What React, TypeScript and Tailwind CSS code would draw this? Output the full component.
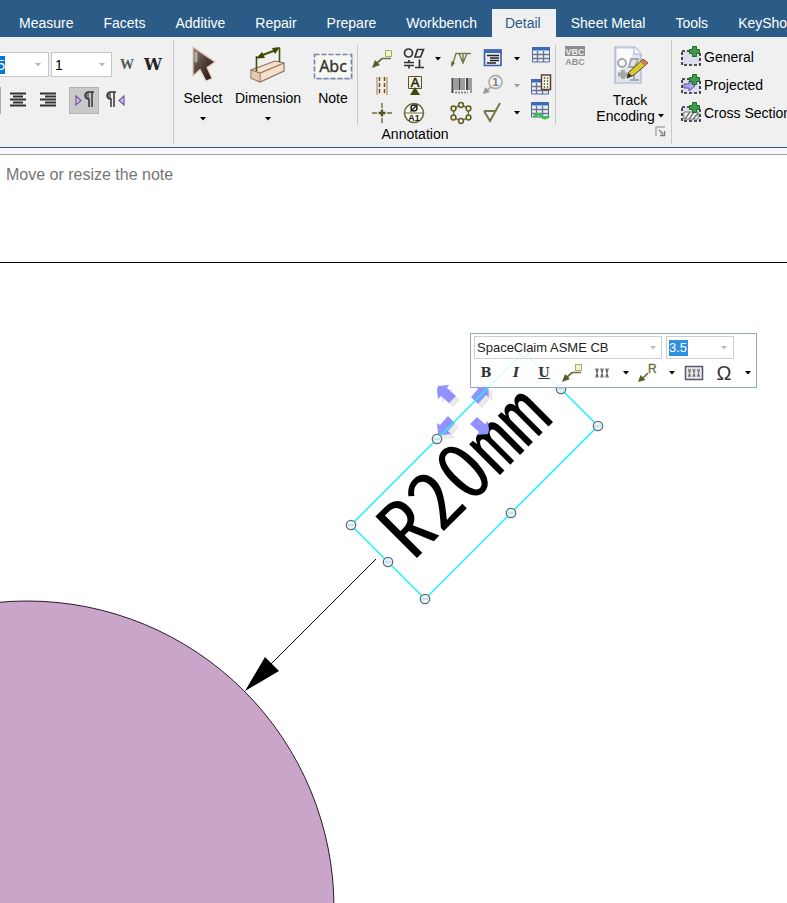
import type { ReactNode } from "react";
import { useState } from "react";

const tabs = [
  "Measure",
  "Facets",
  "Additive",
  "Repair",
  "Prepare",
  "Workbench",
  "Detail",
  "Sheet Metal",
  "Tools",
  "KeyShot",
];

type IconProps = { children: ReactNode; w?: number; h?: number };

const Icon = ({ children, w = 24, h = 24 }: IconProps) => (
  <svg width={w} height={h} viewBox={`0 0 ${w} ${h}`} className="block shrink-0" aria-hidden="true">
    {children}
  </svg>
);

const Caret = ({ color = "#000" }: { color?: string }) => (
  <Icon w={6} h={4}>
    <path d="M0 0H6L3 3.5Z" fill={color} />
  </Icon>
);

type ToolProps = { label: string; children: ReactNode; className?: string };

const Tool = ({ label, children, className = "size-6" }: ToolProps) => (
  <button type="button" aria-label={label} className={`flex shrink-0 items-center justify-center ${className}`}>
    {children}
  </button>
);

const Separator = () => <div className="w-px shrink-0 self-stretch bg-[#c8c8c8]" />;

/* ---------- icons ---------- */

const AlignCenterIcon = () => (
  <Icon w={18} h={16}>
    <path d="M1 1.500H17M4 4.500H14M1 7.500H17M4 10.500H14M1 13.500H17" stroke="#333" strokeWidth="1.8" />
  </Icon>
);

const AlignRightIcon = () => (
  <Icon w={18} h={16}>
    <path d="M1 1.500H17M6 4.500H17M1 7.500H17M6 10.500H17M1 13.500H17" stroke="#333" strokeWidth="1.8" />
  </Icon>
);

const pilcrow = "M7 1H3.5a3.2 3.2 0 0 0 0 7H4V16M7 1V16M4 1H9";

const LtrIcon = () => (
  <Icon w={22} h={18}>
    <path d="M3 5L8 9.5L3 14Z" fill="#c9bfe6" stroke="#7358a8" strokeWidth="1.2" />
    <g transform="translate(12 0)">
      <path d="M4 1H3.5a3.2 3.2 0 0 0 0 7H4Z" fill="#777" />
      <path d={pilcrow} fill="none" stroke="#333" strokeWidth="1.5" />
    </g>
  </Icon>
);

const RtlIcon = () => (
  <Icon w={22} h={18}>
    <path d="M19 5L14 9.5L19 14Z" fill="#c9bfe6" stroke="#7358a8" strokeWidth="1.2" />
    <g transform="translate(2 0)">
      <path d="M4 1H3.5a3.2 3.2 0 0 0 0 7H4Z" fill="#777" />
      <path d={pilcrow} fill="none" stroke="#333" strokeWidth="1.5" />
    </g>
  </Icon>
);

const SelectIcon = () => (
  <Icon w={40} h={40}>
    <defs>
      <linearGradient id="cursor" x1="0" y1="0" x2="1" y2="1">
        <stop offset="0" stopColor="#8a8280" />
        <stop offset="0.4" stopColor="#5a4a45" />
        <stop offset="1" stopColor="#1c0c06" />
      </linearGradient>
    </defs>
    <path
      d="M10 2V31L17 24.500L23 36L29 33.500L24 22.500L32 17Z"
      fill="url(#cursor)"
      stroke="#e8c8b4"
      strokeWidth="1.2"
    />
    <path d="M13 8V16" stroke="#d0cac8" strokeWidth="3" strokeLinecap="round" opacity="0.7" />
  </Icon>
);

const DimensionIcon = () => (
  <Icon w={40} h={40}>
    <path d="M3 25L27 16L36 18V26L12 37L3 33Z" fill="#f7dfcb" stroke="#8d7465" strokeWidth="1.2" />
    <path d="M3 25L12 28L36 18M12 28V37" fill="none" stroke="#8d7465" strokeWidth="1.2" />
    <path d="M3.500 26L11.500 28.500V36L3.500 33Z" fill="#e8c8b0" />
    <path d="M8.500 11V26M31.500 3V17" stroke="#4a5208" strokeWidth="1.6" />
    <path d="M12 11L28 5" stroke="#4a5208" strokeWidth="2.2" />
    <path d="M8 13.500L14 7L17 13ZM32 2L24 3L27 9Z" fill="#3d4500" />
  </Icon>
);

const NoteIcon = () => (
  <svg width="40" height="40" viewBox="0 0 40 40" className="block shrink-0" aria-hidden="true">
    <path d="M3 10H40V35H3Z" fill="#d8d8d8" />
    <path d="M1.500 9.500H38.500V33.500H1.500Z" fill="#f7f8f1" stroke="#7382b4" strokeWidth="1.6" strokeDasharray="5 2" />
    <text x="20" y="27" textAnchor="middle" fontSize="16" fill="#333" stroke="#333" strokeWidth="0.3" className="font-['Noto_Sans','Open_Sans',sans-serif]">
      Abc
    </text>
  </svg>
);

const LeaderNoteIcon = () => (
  <Icon>
    <path d="M15.500 3.500H21.500V9.500H15.500Z" fill="#f2f2c4" stroke="#a9a96a" />
    <path d="M21 11.500H12L6 17" fill="none" stroke="#6b6b38" strokeWidth="1.700" />
    <path d="M2 21L5 13L10 18Z" fill="#5c5c28" />
  </Icon>
);

const ToleranceIcon = () => (
  <Icon>
    <g fill="none" stroke="#333" strokeWidth="1.700">
      <circle cx="6.500" cy="6" r="4" />
      <path d="M15.500 2.500H21.500L18.500 10H13ZM2 15.500H12M2 18.500H12M7 13V15M7 19V21.500M17.500 12.500V20.500M13 20.500H22" />
    </g>
  </Icon>
);

const SurfaceIcon = () => (
  <Icon>
    <path d="M3 19L7 6.500H22M10 6.500L14 16L18 6.500M14 6.500V16" fill="none" stroke="#77774c" strokeWidth="1.400" />
    <path d="M2 20L2.500 14L6 16Z" fill="#66663a" />
  </Icon>
);

const CenterlineIcon = () => (
  <Icon>
    <path d="M6 3H11V21H6ZM13 3H18V21H13Z" fill="#fbe4d8" />
    <path d="M7 3V21M17 3V21" stroke="#b09080" strokeWidth="1.200" />
    <path d="M9.500 3V21M14.500 3V21" stroke="#4f5b2a" strokeWidth="1.400" strokeDasharray="4 2" />
  </Icon>
);

const DatumIcon = () => (
  <svg width="24" height="24" viewBox="0 0 24 24" className="block" aria-hidden="true">
    <path d="M6.500 2.500H19.500V14.500H6.500Z" fill="#f4f4dc" stroke="#55552a" />
    <text x="13" y="13" textAnchor="middle" fontSize="13" fill="#222" stroke="#222" strokeWidth="0.500" className="font-['Liberation_Sans']">
      A
    </text>
    <path d="M13 13L18 21H8Z" fill="#44440f" />
  </svg>
);

const BarcodeIcon = () => (
  <Icon>
    <path d="M3.500 4V19M10.500 4V16M18 4V16" stroke="#444" strokeWidth="2" />
    <path d="M6 4V16M8 4V16M13 4V16M15 4V16M20 4V16M22 4V19" stroke="#666" strokeWidth="1.200" />
    <path d="M6 18.500H19" stroke="#888" strokeWidth="2" strokeDasharray="2 1" />
  </Icon>
);

const CenterMarkIcon = () => (
  <Icon>
    <path d="M12 2V7M12 17V22M2 12H7M17 12H22" stroke="#8a8a5c" strokeWidth="1.800" />
    <path d="M8.500 12H15.500M12 8.500V15.500" stroke="#55552a" strokeWidth="2.400" />
  </Icon>
);

const DatumTargetIcon = () => (
  <svg width="24" height="24" viewBox="0 0 24 24" className="block" aria-hidden="true">
    <circle cx="12" cy="12" r="9.500" fill="#fafaf0" stroke="#6b6b38" strokeWidth="1.600" />
    <path d="M2 12H22" stroke="#6b6b38" />
    <g fill="none" stroke="#222" strokeWidth="1.500">
      <circle cx="12" cy="7" r="3" />
      <path d="M8.500 10.500L15.500 3.500" />
    </g>
    <text x="12" y="20" textAnchor="middle" fontSize="9" fontWeight="700" fill="#222" className="font-['Liberation_Sans']">
      A1
    </text>
  </svg>
);

const BoltCircleIcon = () => (
  <Icon>
    <circle cx="12" cy="12" r="7.500" fill="none" stroke="#6b6b38" strokeWidth="1.300" />
    {[
      [12, 4],
      [19.5, 7.5],
      [19.5, 16.5],
      [12, 20],
      [4.5, 16.5],
      [4.5, 7.5],
    ].map(([x, y]) => (
      <circle key={`${x}-${y}`} cx={x} cy={y} r="2.400" fill="#f4f4dc" stroke="#5c5c28" strokeWidth="1.500" />
    ))}
  </Icon>
);

const NotesListIcon = () => (
  <Icon>
    <path d="M3.500 3H20V18.500H3.500Z" fill="#e6ebf5" stroke="#3d5f9c" strokeWidth="1.600" />
    <path d="M3 2.500H21V6H3Z" fill="#3c6cb8" />
    <path d="M6 8.500H18M9 11H18M9 13.500H18M6 16H15" stroke="#222" strokeWidth="1.500" />
  </Icon>
);

const BalloonIcon = () => (
  <svg width="24" height="24" viewBox="0 0 24 24" className="block" aria-hidden="true">
    <circle cx="14.500" cy="8" r="6.500" fill="#f4f4f4" stroke="#b0b0b0" strokeWidth="1.800" />
    <text x="14.500" y="11.500" textAnchor="middle" fontSize="10" fontWeight="700" fill="#888" className="font-['DejaVu_Sans']">
      1
    </text>
    <path d="M10 13L5 17" stroke="#a8a8a8" strokeWidth="1.800" />
    <path d="M2 20L4 13L9 18Z" fill="#999" />
  </svg>
);

const FinishIcon = () => (
  <Icon>
    <path d="M3 10H14M3 10L9 20L19 2" fill="none" stroke="#77774c" strokeWidth="2" />
  </Icon>
);

const TableBase = () => (
  <>
    <path d="M3.500 2.500H20.500V17H3.500Z" fill="#eef2fa" stroke="#506a9c" />
    <path d="M3 9.500H20M3 13.500H20M8.500 6V17M14.500 6V17" stroke="#6c7490" strokeWidth="1.400" />
    <path d="M3 2H21V5.500H3Z" fill="#3c6cb8" />
  </>
);

const TableIcon = () => (
  <Icon>
    <g transform="translate(0 -2)">
      <TableBase />
    </g>
  </Icon>
);

const HoleTableIcon = () => (
  <Icon>
    <g transform="translate(-1 3)">
      <TableBase />
    </g>
    <path d="M12.500 1H21.500V15.500H12.500Z" fill="#fff6e8" stroke="#5a4030" strokeWidth="1.500" />
    <path d="M15.500 3V14M18.500 3V14" stroke="#5b7a58" strokeWidth="1.300" strokeDasharray="2 1" />
  </Icon>
);

const BendTableIcon = () => (
  <Icon>
    <g transform="translate(-1 -1)">
      <TableBase />
    </g>
    <path d="M5 16Q8 11 12 15T20 15" fill="none" stroke="#38c24c" strokeWidth="2.800" />
  </Icon>
);

const SpellIcon = () => (
  <svg width="24" height="24" viewBox="0 0 24 24" className="block" aria-hidden="true">
    <path d="M2 1H22V11H2Z" fill="#8c8c8c" />
    <text x="12" y="10" textAnchor="middle" fontSize="9" fontWeight="700" fill="#eee" className="font-['Liberation_Sans']">
      VBC
    </text>
    <text x="12" y="20" textAnchor="middle" fontSize="9" fontWeight="700" fill="#909090" className="font-['Liberation_Sans']">
      ABC
    </text>
  </svg>
);

const TrackIcon = () => (
  <Icon w={40} h={40}>
    <path d="M5 2H25L31 9V38H5Z" fill="#dfe4f1" stroke="#a8b0c8" strokeWidth="1.200" />
    <path d="M7 4H24L19 20L7 26Z" fill="#fafbff" />
    <path d="M24 2V9H31" fill="#fff" stroke="#a8b0c8" />
    <g fill="none" stroke="#a8a8a8" strokeWidth="2">
      <circle cx="12" cy="18" r="4" />
      <path d="M21 14H28L25 22H19ZM24 29V36M20 35H29" />
      <path d="M8 29.500H18M13 25V34" strokeWidth="4" />
    </g>
    <path d="M17 33L19 27L33 14L38 18L24 30Z" fill="#d9c830" stroke="#55480c" />
    <path d="M33 14L38 18L35 21L30.500 17Z" fill="#c47a5c" />
    <path d="M17 33L18.500 28L22 31Z" fill="#333" />
  </Icon>
);

const ViewIcon = ({ kind }: { kind: string }) => (
  <Icon w={22} h={22}>
    <path d="M2 5H20V19H2Z" fill="#dcdeee" />
    <path d="M2 5H20V19H2Z" fill="none" stroke="#222" strokeWidth="1.600" strokeDasharray="3 2" />
    {kind === "Projected" && (
      <path d="M4 10H9V7L15 12L9 17V14H4Z" fill="#a8a8f4" stroke="#55559c" />
    )}
    {kind === "Cross Section" && (
      <>
        <path d="M4 10H18V17H4Z" fill="#fff" stroke="#777" />
        <path d="M5 17L10 10M9 17L14 10M13 17L18 11" stroke="#777" strokeWidth="1.500" />
      </>
    )}
    <path d="M12.500 0.500H16.500V3.500H19.500V7.500H16.500V10.500H12.500V7.500H9.500V3.500H12.500Z" fill="#3f9c4a" stroke="#1e6a2b" />
  </Icon>
);

const FieldIcon = () => (
  <Icon w={16} h={16}>
    <path d="M1 4H5M6 4H10M11 4H15M1 12H5M6 12H10M11 12H15" stroke="#888" />
    <path d="M2 4L4 12M4 4L2 12M7 4L9 12M9 4L7 12M12 4L14 12M14 4L12 12" stroke="#666" strokeWidth="1.100" />
  </Icon>
);

const BoxedFieldIcon = () => (
  <Icon w={20} h={18}>
    <path d="M1.500 2.500H18.500V15.500H1.500Z" fill="#e8e8ec" stroke="#555a70" strokeWidth="1.500" />
    <path d="M4.500 5L6.500 13M6.500 5L4.500 13M9 5L11 13M11 5L9 13M13.500 5L15.500 13M15.500 5L13.500 13" stroke="#777" strokeWidth="1.100" />
  </Icon>
);

const LeaderRIcon = () => (
  <svg width="20" height="20" viewBox="0 0 20 20" className="block" aria-hidden="true">
    <path d="M10 10L4 16" stroke="#6b6b38" strokeWidth="1.700" />
    <path d="M0 19L2.500 12L7.500 17Z" fill="#5c5c28" />
    <text x="10" y="10" fontSize="12" fill="#6b6b38" stroke="#6b6b38" strokeWidth="0.300" className="font-['Liberation_Sans']">
      R
    </text>
  </svg>
);

/* ---------- ribbon ---------- */

type BigButtonProps = { label: string; icon: ReactNode; menu?: boolean; className: string };

const BigButton = ({ label, icon, menu = false, className }: BigButtonProps) => (
  <button type="button" className={`flex flex-col items-center ${className}`}>
    {icon}
    <span className="mt-[5px] mb-[11px] leading-4">{label}</span>
    {menu && <Caret />}
  </button>
);

const Ribbon = () => {
  const [active, setActive] = useState("Detail");
  const [lineWidth, setLineWidth] = useState("1");

  return (
    <header className="overflow-hidden whitespace-nowrap text-sm text-black">
      <nav className="flex h-[37px] items-end bg-[#2b5c88] pl-1">
        {tabs.map((tab) => (
          <button
            key={tab}
            type="button"
            onClick={() => setActive(tab)}
            className={
              tab === active
                ? "h-7 shrink-0 bg-[#f0f0f0] pr-[15px] pl-[13px] text-[#2b5c88]"
                : "h-7 shrink-0 px-[15px] text-white"
            }
          >
            {tab}
          </button>
        ))}
      </nav>

      <div className="flex h-[111px] border-b border-[#2b5c88] bg-[#f0f0f0]">
        <div className="flex w-[173px] shrink-0 flex-col pt-[15px]">
          <div className="flex items-center">
            <div className="flex h-[25px] w-[49px] items-center justify-between border border-l-0 border-[#c6c6c6] bg-white pr-[7px]">
              <input aria-label="Size" defaultValue="5" className="h-[18px] w-[5px] bg-[#0078d7] text-right text-white [direction:rtl]" />
              <Caret color="#b5b5b5" />
            </div>
            <div className="relative ml-0.5 flex items-center">
              <select
                aria-label="Spacing"
                value={lineWidth}
                onChange={(e) => setLineWidth(e.target.value)}
                className="h-[25px] w-[61px] appearance-none border border-[#c6c6c6] bg-white pl-[3px]"
              >
                <option>1</option>
                <option>2</option>
              </select>
              <span className="pointer-events-none absolute right-[7px]">
                <Caret color="#b5b5b5" />
              </span>
            </div>
            <button type="button" className="ml-[7px] w-4 font-['Liberation_Serif'] text-sm leading-5 font-bold text-[#555]">W</button>
            <button type="button" className="ml-2 w-5 font-['DejaVu_Serif'] text-base leading-5 font-bold text-[#222]">W</button>
          </div>
          <div className="mt-[9px] flex items-center">
            <div className="h-[27px] w-px bg-[#aaa]" />
            <Tool label="Align center" className="ml-1 h-7 w-[26px]">
              <AlignCenterIcon />
            </Tool>
            <Tool label="Align right" className="ml-1 h-7 w-[26px]">
              <AlignRightIcon />
            </Tool>
            <Tool label="Left to right" className="ml-2 h-[27px] w-[30px] border border-[#b2b2b2] bg-[#c9c9c9]">
              <LtrIcon />
            </Tool>
            <Tool label="Right to left" className="ml-0.5 h-[27px] w-[30px]">
              <RtlIcon />
            </Tool>
          </div>
        </div>

        <div className="flex shrink-0 py-[3px]">
          <Separator />
        </div>

        <section className="flex w-[497px] shrink-0 flex-col pt-2">
          <div className="flex h-20">
            <div className="flex w-[183px] items-start gap-3 pl-[9px]">
              <BigButton label="Select" icon={<SelectIcon />} menu className="w-10" />
              <BigButton label="Dimension" icon={<DimensionIcon />} menu className="w-[66px]" />
              <BigButton label="Note" icon={<NoteIcon />} className="w-10" />
            </div>
            <Separator />
            <div className="ml-3 grid grid-cols-[32px_30px_17px_32px_30px_18px_24px] grid-rows-[27px_27px_27px] items-center">
              <Tool label="Leader note"><LeaderNoteIcon /></Tool>
              <Tool label="Geometric tolerance"><ToleranceIcon /></Tool>
              <Tool label="Tolerance options" className="h-6 w-3"><Caret /></Tool>
              <Tool label="Surface texture"><SurfaceIcon /></Tool>
              <Tool label="Note list"><NotesListIcon /></Tool>
              <Tool label="Note list options" className="h-6 w-3"><Caret /></Tool>
              <Tool label="Table"><TableIcon /></Tool>

              <Tool label="Centerline"><CenterlineIcon /></Tool>
              <Tool label="Datum"><DatumIcon /></Tool>
              <span />
              <Tool label="Barcode"><BarcodeIcon /></Tool>
              <Tool label="Balloon"><BalloonIcon /></Tool>
              <Tool label="Balloon options" className="h-6 w-3"><Caret color="#999" /></Tool>
              <Tool label="Hole table"><HoleTableIcon /></Tool>

              <Tool label="Center mark"><CenterMarkIcon /></Tool>
              <Tool label="Datum target"><DatumTargetIcon /></Tool>
              <span />
              <Tool label="Bolt circle"><BoltCircleIcon /></Tool>
              <Tool label="Surface finish"><FinishIcon /></Tool>
              <Tool label="Finish options" className="h-6 w-3"><Caret /></Tool>
              <Tool label="Bend table"><BendTableIcon /></Tool>
            </div>
            <div className="ml-0.5 flex">
              <Separator />
            </div>
            <Tool label="Spelling" className="ml-[7px] size-6"><SpellIcon /></Tool>
            <button type="button" className="ml-2 flex w-[70px] flex-col items-center leading-4">
              <TrackIcon />
              <span className="mt-[7px]">Track</span>
              <span className="flex items-center gap-[3px]">
                Encoding <Caret />
              </span>
            </button>
          </div>
          <div className="flex items-start pr-[5px] pl-0.5">
            <h2 className="flex-1 text-center leading-[18px]">Annotation</h2>
            <Tool label="Annotation options" className="size-3">
              <Icon w={11} h={11}>
                <path d="M1 10V1H10" fill="none" stroke="#888" />
                <path d="M4 4L8 8M5 9.500H9.500V5" fill="none" stroke="#777" strokeWidth="1.300" />
              </Icon>
            </Tool>
          </div>
        </section>

        <div className="flex shrink-0 py-[3px]">
          <Separator />
        </div>

        <div className="flex flex-col pt-1.5 pl-2">
          {["General", "Projected", "Cross Section"].map((kind) => (
            <button key={kind} type="button" className="flex h-7 items-center gap-0.5">
              <ViewIcon kind={kind} />
              {kind}
            </button>
          ))}
        </div>
      </div>
    </header>
  );
};

/* ---------- drawing sheet ---------- */

const handles = [
  [351, 262],
  [388, 299],
  [425, 336],
  [511, 250],
  [598, 163],
  [561, 126],
  [524, 89],
  [437, 176],
];

// x, y and rotation of each move arrow
const moveArrows = [
  [446, 131, 0],
  [480, 131, 90],
  [480, 163, 180],
  [446, 163, 270],
];

const arrowShape = "M-8 -8L3 -9L1 -6L10 2L3 9L-5 2L-8 5L-9 -4Z";

const Drawing = () => (
  <svg className="block min-h-[640px] w-full flex-1" role="img" aria-label="Radius note attached to a circle">
    <circle cx="27" cy="645" r="307" fill="#c9a5c9" stroke="#2a1a2a" />
    <path d="M376 296L262 410" stroke="#000" />
    <path d="M245 428L265 394L279 408Z" fill="#000" />
    <text
      transform="translate(413 299) rotate(-45)"
      fontSize="80"
      className="font-['Noto_Sans_Mono_CJK_SC','Noto_Sans_CJK_SC',monospace]"
    >
      R20mm
    </text>
    {moveArrows.map(([x, y, angle]) => (
      <g key={angle}>
        {angle !== 180 && (
          <path d={arrowShape} fill="#e9e9e9" transform={`translate(${x + 4} ${y + 4}) rotate(${angle})`} />
        )}
        <path d={arrowShape} fill="#9292ff" transform={`translate(${x} ${y}) rotate(${angle})`} />
      </g>
    ))}
    <path d="M351 262L425 336L598 163L524 89Z" fill="none" stroke="#18f4f8" strokeWidth="1.500" />
    {handles.map(([x, y]) => (
      <g key={`${x}-${y}`}>
        <circle cx={x} cy={y} r="4.700" fill="#e4f6f8" stroke="#5c6c78" strokeWidth="1.300" />
        <path d={`M${x - 3} ${y}H${x + 3}`} stroke="#a8cdd2" />
      </g>
    ))}
  </svg>
);

const MiniToolbar = () => {
  const [font, setFont] = useState("SpaceClaim ASME CB");

  return (
    <div className="absolute top-[70px] left-[470px] h-[55px] w-[287px] border border-[#91a9c3] bg-white/85 text-[13px]">
      <div className="flex gap-1 px-[3px] pt-0.5">
        <div className="relative flex items-center">
          <select
            aria-label="Font"
            value={font}
            onChange={(e) => setFont(e.target.value)}
            className="h-[23px] w-[188px] appearance-none border border-[#cfcfcf] bg-transparent pl-0.5 text-[#222]"
          >
            <option>SpaceClaim ASME CB</option>
            <option>Arial</option>
          </select>
          <span className="pointer-events-none absolute right-1.5">
            <Caret color="#bbb" />
          </span>
        </div>
        <div className="flex h-[23px] w-[68px] items-center justify-between border border-[#cfcfcf] pr-1.5 pl-0.5">
          <input aria-label="Font size" defaultValue="3.5" className="h-4 w-[19px] bg-[#2f8fe0] text-white" />
          <Caret color="#bbb" />
        </div>
      </div>
      <div className="mt-px flex h-[26px] items-center pl-[3px] font-['DejaVu_Serif'] text-[13px] text-[#333]">
        <button type="button" className="w-6 font-bold">B</button>
        <button type="button" className="ml-1.5 w-6 font-bold italic">I</button>
        <button type="button" className="ml-1 w-6 font-bold underline">U</button>
        <Tool label="Leader" className="ml-1 size-6"><LeaderNoteIcon /></Tool>
        <Tool label="Insert field" className="ml-1.5 size-6"><FieldIcon /></Tool>
        <Tool label="Field options" className="ml-2 h-6 w-2"><Caret /></Tool>
        <Tool label="Radius leader" className="ml-1.5 size-6"><LeaderRIcon /></Tool>
        <Tool label="Leader options" className="ml-2 h-6 w-2"><Caret /></Tool>
        <Tool label="Boxed field" className="ml-1.5 size-6"><BoxedFieldIcon /></Tool>
        <button type="button" className="ml-1.5 w-6 font-['Liberation_Sans'] text-xl leading-6">Ω</button>
        <Tool label="Symbol options" className="ml-2 h-6 w-2"><Caret /></Tool>
      </div>
    </div>
  );
};

const App = () => (
  <div className="flex min-h-screen flex-col overflow-x-hidden bg-white font-['Liberation_Sans',Arial,sans-serif]">
    <Ribbon />
    <div className="h-[7px] border-b border-[#a8a498] bg-[#f6f8fc]" />
    <p className="h-[108px] border-b border-black pt-2 pl-1.5 text-base text-[#757575]">Move or resize the note</p>
    <main className="relative flex flex-1 flex-col">
      <Drawing />
      <MiniToolbar />
    </main>
  </div>
);

export default App;
